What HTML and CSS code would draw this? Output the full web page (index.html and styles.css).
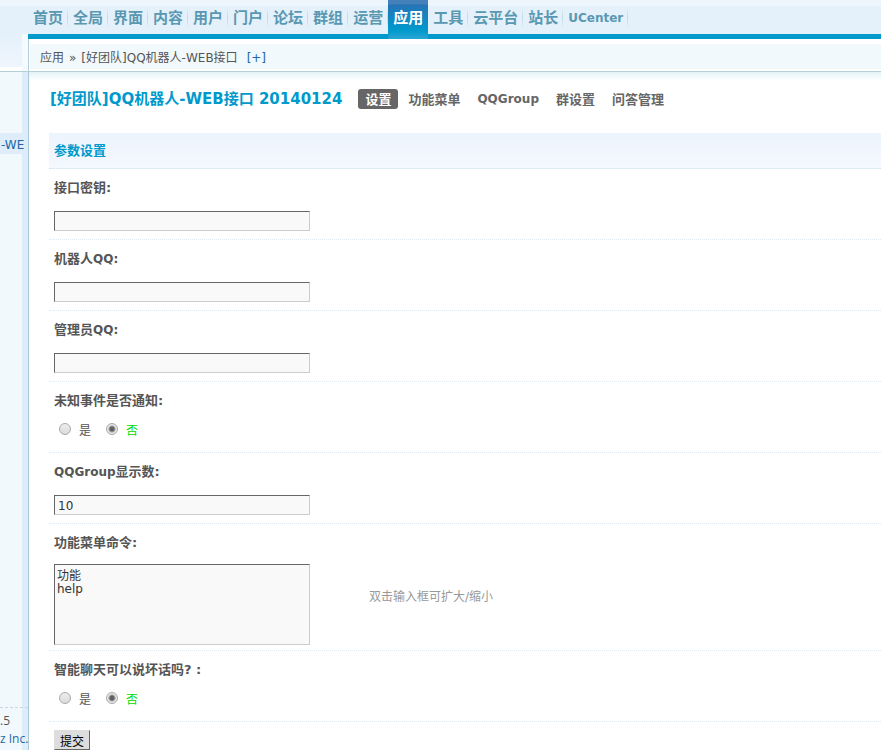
FILE: index.html
```html
<!DOCTYPE html>
<html lang="zh-CN">
<head>
<meta charset="utf-8">
<title>应用</title>
<link rel="stylesheet" href="styles.css">
</head>
<body>
<header class="top">
  <div class="top-side"></div>
  <div class="top-main">
    <nav class="nav">
      <a href="#">首页</a><a href="#">全局</a><a href="#">界面</a><a href="#">内容</a><a href="#">用户</a><a href="#">门户</a><a href="#">论坛</a><a href="#">群组</a><a href="#">运营</a><a href="#" class="active">应用</a><a href="#">工具</a><a href="#">云平台</a><a href="#">站长</a><a href="#" class="latin">UCenter</a>
    </nav>
    <div class="crumbs"><span>应用</span><span>»</span><span>[好团队]QQ机器人-WEB接口</span><a href="#">[+]</a></div>
  </div>
</header>
<div class="body">
  <aside class="side">
    <a href="#" class="side-item">-WE</a>
    <div class="copyright">.5<br><a href="#">z Inc.</a></div>
  </aside>
  <main class="main">
    <div class="heading">
      <h1>[好团队]QQ机器人-WEB接口 20140124</h1>
      <nav class="tabs">
        <a href="#" class="current">设置</a><a href="#">功能菜单</a><a href="#" class="latin">QQGroup</a><a href="#">群设置</a><a href="#">问答管理</a>
      </nav>
    </div>
    <form class="settings">
      <h2>参数设置</h2>
      <div class="field">
        <label class="name" for="key">接口密钥:</label>
        <div class="control"><input class="text" type="text" id="key"></div>
      </div>
      <div class="field">
        <label class="name" for="robot">机器人<span class="latin">QQ:</span></label>
        <div class="control"><input class="text" type="text" id="robot"></div>
      </div>
      <div class="field">
        <label class="name" for="admin">管理员<span class="latin">QQ:</span></label>
        <div class="control"><input class="text" type="text" id="admin"></div>
      </div>
      <div class="field" role="radiogroup" aria-labelledby="notify">
        <div class="name" id="notify">未知事件是否通知:</div>
        <div class="radios"><label><input type="radio" name="notify">是</label><label><input type="radio" name="notify" checked><span>否</span></label></div>
      </div>
      <div class="field">
        <label class="name" for="count"><span class="latin">QQGroup</span>显示数:</label>
        <div class="control"><input class="text" type="text" id="count" value="10"></div>
      </div>
      <div class="field">
        <label class="name" for="menu">功能菜单命令:</label>
        <div class="control area"><textarea id="menu">功能
help</textarea><span class="hint">双击输入框可扩大/缩小</span></div>
      </div>
      <div class="field" role="radiogroup" aria-labelledby="talk">
        <div class="name" id="talk">智能聊天可以说坏话吗? :</div>
        <div class="radios"><label><input type="radio" name="talk">是</label><label><input type="radio" name="talk" checked><span>否</span></label></div>
      </div>
      <button type="submit">提交</button>
    </form>
  </main>
</div>
</body>
</html>
```

FILE: styles.css
```css
* { box-sizing: border-box; }
body {
  margin: 0;
  min-height: 100vh;
  display: flex;
  flex-direction: column;
  font: 12px/18px "DejaVu Sans", "Noto Sans CJK SC", sans-serif;
  color: #555;
  background: #fff;
  overflow-x: hidden;
}
a { color: #2366a8; text-decoration: none; }

.top { display: flex; border-bottom: 1px solid #b5cfd9; }
.top-side {
  width: 28px;
  flex: none;
  background:
    linear-gradient(#f4fafd, #f4fafd) 22px 34px / 6px 37px no-repeat,
    linear-gradient(#fff, #fff) 0 67px / 22px 4px no-repeat,
    linear-gradient(#edf5fd 6px, #e4f1fb 6px, #e4f1fb 34px, #f0f6fd);
}
.top-main { flex: 1; min-width: 0; }
.nav {
  display: flex;
  height: 39px;
  background: linear-gradient(#edf5fd 6px, #e4f1fb 6px, #e4f1fb 34px, #09c 34px);
}
.nav a {
  padding: 0 5px;
  font-size: 15px;
  font-weight: bold;
  line-height: 36px;
  color: #5a98b2;
  background: linear-gradient(#e4f1fb, #bdd7e4, #e4f1fb) right 8px / 1px 20px no-repeat;
}
.nav a.latin { font-size: 12px; }
.nav a.active { color: #fff; background: linear-gradient(#4480ba 4px, #2674b6 5px, #09c 30px, #29a6d5); }
.crumbs {
  display: flex;
  gap: 5px;
  height: 32px;
  padding: 5px 0 2px 11px;
  line-height: 28px;
  border-left: 1px solid #b5cfd9;
  background: linear-gradient(#f1f9fc, #f1f9fc) 1px 5px / 100% 25px no-repeat;
}
.crumbs a { margin-left: 4px; }

.body { flex: 1; display: flex; }
.side {
  width: 29px;
  flex: none;
  display: flex;
  flex-direction: column;
  padding-top: 61px;
  border-right: 1px solid #a9cadb;
  background: linear-gradient(90deg, #f1f9fc 22px, #deedf9 22px);
  white-space: nowrap;
}
.side-item { width: 24px; height: 21px; padding-left: 1px; line-height: 24px; background: linear-gradient(#deedf9, #deedf9); }
.copyright {
  margin-top: auto;
  padding: 4px 0 2px;
  border-top: 1px dashed #ccd6dc;
  font-family: "Open Sans", sans-serif;
}

.main { flex: 1; min-width: 0; padding-left: 20px; background: linear-gradient(#e4f2f8, #fff 9px); }
.heading { display: flex; align-items: center; height: 61px; padding-bottom: 7px; white-space: nowrap; }
h1 { margin: 0 16px 0 1px; font-size: 15px; line-height: 20px; color: #09c; }
.tabs { display: flex; gap: 3px; }
.tabs a { padding: 1px 7px 0; font-size: 13px; font-weight: bold; line-height: 19px; color: #666; }
.tabs a.latin { font-size: 12px; }
.tabs a.current { color: #fff; background: #666; border-radius: 3px; }

h2 {
  margin: 0;
  padding: 1px 0 0 5px;
  font-size: 13px;
  line-height: 34px;
  color: #09c;
  background: linear-gradient(#ebf4fd, #f1f6fe 50%, #f3f9fd);
  border-bottom: 1px dotted #d4e4ee;
}
.field { border-bottom: 1px dotted #deebf2; padding-left: 5px; }
.name { display: block; padding-top: 2px; font-size: 13px; line-height: 34px; font-weight: bold; }
.name .latin { font-size: 12px; }
.control { display: flex; align-items: center; padding: 6px 0 8px; }
.area { padding: 4px 0 5px; }
.text, textarea {
  width: 256px;
  margin: 0;
  border: 1px solid;
  border-color: #666 #ccc #ccc #666;
  border-radius: 0;
  background: #f9f9f9;
  color: #333;
  font: inherit;
}
.text { height: 20px; padding: 1px 3px 0; }
textarea { height: 81px; padding: 5px 2px; line-height: 13px; resize: none; overflow: hidden; }
.hint { margin: 0 0 16px 59px; color: #999; }
.radios { display: flex; gap: 15px; height: 34px; padding-left: 5px; line-height: 26px; }
.radios label { display: flex; gap: 8px; }
.radios span { color: #0d0; }
.radios input {
  appearance: none;
  width: 12px;
  height: 12px;
  margin: 5px 0 0;
  border: 1px solid #aaa;
  border-radius: 50%;
  background: linear-gradient(#ececec, #dcdcdc);
}
.radios input:checked { background: radial-gradient(circle, #606060 2px, #e6e6e6 4px); }
button {
  display: block;
  margin: 8px 0 0 5px;
  width: 36px;
  height: 20px;
  padding: 2px 0 0;
  border: 1px solid;
  border-color: #ddd #666 #666 #ddd;
  background: #ddd;
  color: #000;
  font: inherit;
}
```
